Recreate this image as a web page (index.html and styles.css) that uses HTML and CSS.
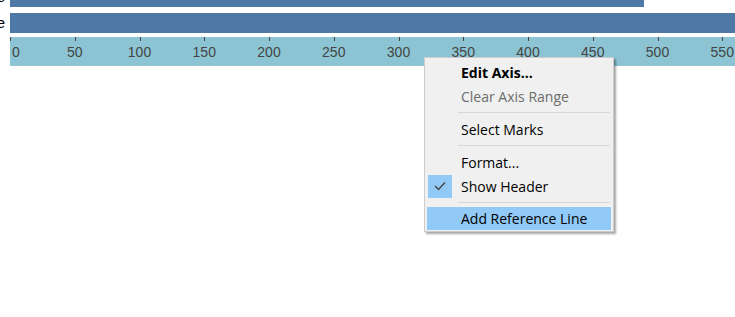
FILE: index.html
```html
<!DOCTYPE html>
<html lang="en">
<head>
  <meta charset="UTF-8">
  <title>Axis Menu</title>
  <link rel="stylesheet" href="styles.css">
</head>
<body>
  <div class="chart">
    <div class="row">
      <div class="label"><span>Large</span></div>
      <div class="track"><div class="bar" style="width: 634px;"></div></div>
    </div>
    <div class="row">
      <div class="label"><span>Average</span></div>
      <div class="track"><div class="bar" style="width: 740px;"></div></div>
    </div>
    <div class="axis">
      <div class="tick first"><span>0</span></div>
      <div class="tick"><span>50</span></div>
      <div class="tick"><span>100</span></div>
      <div class="tick"><span>150</span></div>
      <div class="tick"><span>200</span></div>
      <div class="tick"><span>250</span></div>
      <div class="tick"><span>300</span></div>
      <div class="tick"><span>350</span></div>
      <div class="tick"><span>400</span></div>
      <div class="tick"><span>450</span></div>
      <div class="tick"><span>500</span></div>
      <div class="tick"><span>550</span></div>
    </div>
  </div>

  <div class="menu">
    <div class="item bold"><span class="check"></span>Edit Axis...</div>
    <div class="item disabled"><span class="check"></span>Clear Axis Range</div>
    <div class="sep"></div>
    <div class="item"><span class="check"></span>Select Marks</div>
    <div class="sep"></div>
    <div class="item"><span class="check"></span>Format...</div>
    <div class="item"><span class="check on"><svg width="12" height="10" viewBox="0 0 12 10"><polyline points="1,5 4.5,8.5 11,1.5" fill="none" stroke="#444" stroke-width="1.4"/></svg></span>Show Header</div>
    <div class="sep"></div>
    <div class="item active"><span class="check"></span>Add Reference Line</div>
  </div>
</body>
</html>
```

FILE: styles.css
```css
body {
  margin: 0;
  padding: 0;
  background-color: #ffffff;
  font-family: "Liberation Sans", Arial, sans-serif;
  overflow: hidden;
  width: 735px;
  height: 317px;
}
.chart {
  margin-top: -13px;
}
.row {
  display: flex;
  height: 20px;
  margin-bottom: 6px;
}
.row + .row {
  margin-bottom: 4px;
}
.label {
  width: 10px;
  box-sizing: border-box;
  padding-right: 5px;
  flex: none;
  overflow: hidden;
  display: flex;
  justify-content: flex-end;
  white-space: nowrap;
  font-size: 15px;
  line-height: 20px;
  color: #000000;
}
.label span {
  flex: none;
}
.track {
  flex: 1;
  overflow: hidden;
}
.bar {
  height: 20px;
  background-color: #4e79a7;
}
.axis {
  display: flex;
  margin-left: 10px;
  height: 29px;
  background-color: #8cc4d3;
  overflow: hidden;
}
.tick {
  flex: none;
  width: 64.75px;
  height: 29px;
}
.tick::before {
  content: "";
  display: block;
  width: 1px;
  height: 4px;
  background-color: #444444;
}
.tick span {
  display: block;
  width: 64px;
  margin-left: -32px;
  text-align: center;
  font-size: 14px;
  line-height: 16px;
  margin-top: 3px;
  color: #444444;
}
.tick.first span {
  margin-left: 2px;
  text-align: left;
}
.menu {
  position: absolute;
  left: 424px;
  top: 57px;
  width: 184px;
  padding: 2px 2px 1px 2px;
  background-color: #f0f0f0;
  border: 1px solid #cccccc;
  box-shadow: 2px 2px 2px rgba(0, 0, 0, 0.35);
  font-family: "Open Sans", "Noto Sans", sans-serif;
  font-size: 14px;
  color: #000000;
}
.item {
  display: flex;
  align-items: center;
  height: 24px;
  white-space: nowrap;
}
.item.bold {
  font-weight: bold;
}
.item.disabled {
  color: #6d6d6d;
}
.item.active {
  background-color: #91c9f7;
  height: 23px;
}
.check {
  width: 24px;
  height: 23px;
  margin-left: 1px;
  margin-right: 9px;
  display: flex;
  align-items: center;
  justify-content: center;
  flex: none;
}
.check.on {
  background-color: #91c9f7;
}
.sep {
  height: 1px;
  margin: 4px 1px 4px 31px;
  background-color: #d7d7d7;
}
```
